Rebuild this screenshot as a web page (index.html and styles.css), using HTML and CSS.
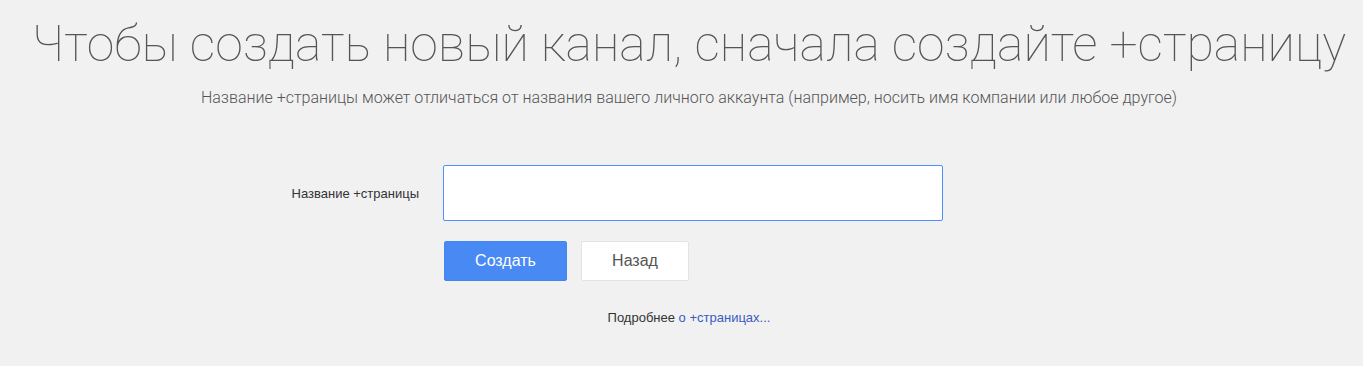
FILE: index.html
```html
<!DOCTYPE html>
<html lang="ru">
<head>
<meta charset="utf-8">
<title>Создать +страницу</title>
<link rel="stylesheet" href="styles.css">
</head>
<body>
<main class="page">
  <h1 class="title">Чтобы создать новый канал, сначала создайте +страницу</h1>
  <p class="subtitle">Название +страницы может отличаться от названия вашего личного аккаунта (например, носить имя компании или любое другое)</p>
  <form class="form">
    <label class="label" for="name">Название +страницы</label>
    <input class="input" id="name" type="text">
    <div class="actions">
      <button class="btn btn-primary" type="button">Создать</button>
      <button class="btn btn-secondary" type="button">Назад</button>
    </div>
  </form>
  <p class="more">Подробнее <a class="link" href="#">о +страницах...</a></p>
</main>
</body>
</html>
```

FILE: styles.css
```css
html, body {
  margin: 0;
  padding: 0;
  background: #f1f1f1;
}
.page {
  padding: 15px 0 0 15px;
  text-align: center;
}
.title {
  margin: 0;
  font-family: Roboto, "Noto Sans", sans-serif;
  font-weight: 100;
  font-size: 50px;
  line-height: 58px;
  color: #555;
  white-space: nowrap;
}
.subtitle {
  margin: 15px 0 0;
  font-family: Roboto, "Noto Sans", sans-serif;
  font-weight: 300;
  font-size: 16px;
  line-height: 20px;
  color: #555;
}
.form {
  margin-top: 57px;
  display: grid;
  grid-template-columns: 1fr 500px 1fr;
  column-gap: 24px;
  row-gap: 20px;
  padding-left: 8px;
  text-align: left;
}
.label {
  grid-column: 1;
  justify-self: end;
  align-self: center;
  font-family: "Liberation Sans", Arial, sans-serif;
  font-size: 13px;
  color: #333;
}
.input {
  grid-column: 2;
  box-sizing: border-box;
  width: 500px;
  height: 56px;
  margin: 0;
  border: 1px solid #4d90fe;
  border-radius: 2px;
  background: #fff;
  outline: none;
  padding: 0 10px;
  font-size: 16px;
}
.actions {
  grid-column: 2;
  display: flex;
  gap: 14px;
  padding-left: 1px;
}
.btn {
  box-sizing: border-box;
  height: 40px;
  border-radius: 2px;
  font-family: "Liberation Sans", Arial, sans-serif;
  font-size: 16px;
  cursor: pointer;
  margin: 0;
}
.btn-primary {
  width: 123px;
  border: 1px solid #4285f4;
  background: #4889f4;
  color: #fff;
}
.btn-secondary {
  width: 108px;
  border: 1px solid #e3e3e3;
  background: #fff;
  color: #555;
}
.more {
  margin: 29px 0 0;
  font-family: "Liberation Sans", Arial, sans-serif;
  font-size: 13px;
  color: #333;
}
.link {
  color: #3a5cc0;
  text-decoration: none;
}
```
